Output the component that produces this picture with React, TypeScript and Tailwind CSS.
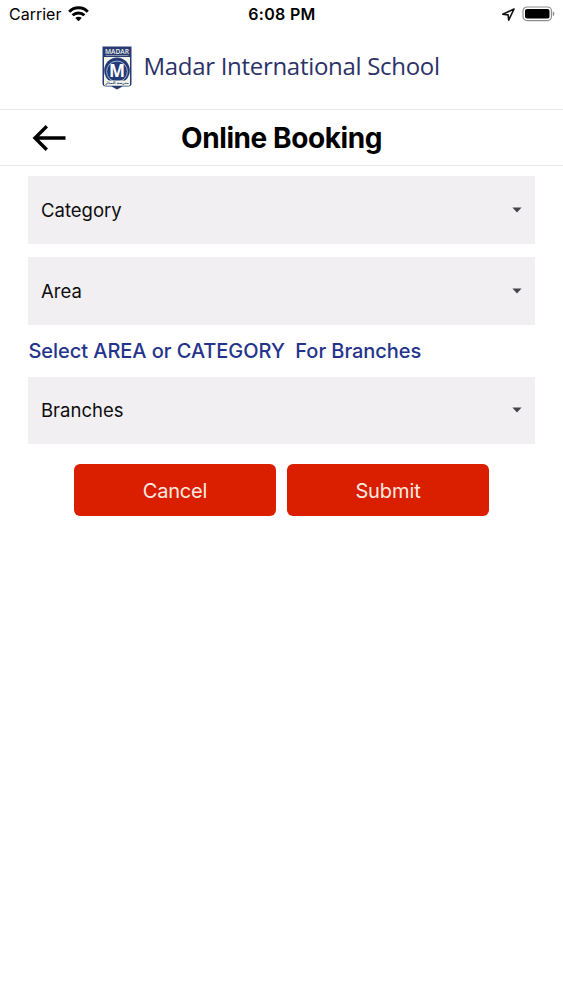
import React from 'react';

interface SelectFieldProps {
  label: string;
}

const SelectField: React.FC<SelectFieldProps> = ({ label }) => (
  <button className="flex h-[67.5px] w-full items-center justify-between bg-[#f1eff2] pl-[13px] pr-[13.5px] text-left">
    <span className="text-[18.5px] leading-6 text-[#0c0c0e]">{label}</span>
    <svg width="10" height="6" viewBox="0 0 10 6" className="shrink-0">
      <path d="M0.4 0.6h9.2L5 5.4z" fill="#47454a" />
    </svg>
  </button>
);

const StatusBar = () => (
  <div className="grid h-[28px] grid-cols-3 items-center pl-[9px] pr-[8px] text-black">
    <div className="flex items-center gap-[7px]">
      <span className="text-[16px] leading-5">Carrier</span>
      <svg width="21" height="16" viewBox="0 0 21 16" fill="none" stroke="#000" strokeWidth="3">
        <path d="M1.2 5.7a13.2 13.2 0 0 1 18.6 0" />
        <path d="M4.6 9.3a8.4 8.4 0 0 1 11.8 0" />
        <path d="M10.5 15.3l-3.2-3.2a4.6 4.6 0 0 1 6.4 0z" fill="#000" stroke="none" />
      </svg>
    </div>
    <span className="text-center text-[16px] font-semibold leading-5 tracking-[0.3px]">6:08 PM</span>
    <div className="flex items-center justify-end gap-[6px]">
      <svg width="15" height="15" viewBox="0 0 15 15" fill="none" stroke="#111" strokeWidth="1.6" strokeLinejoin="round">
        <path d="M13 2L1.8 7.3l5.3.6.6 5.3z" />
      </svg>
      <svg width="33" height="16" viewBox="0 0 33 16">
        <rect x="1" y="1" width="28.5" height="13.6" rx="4" fill="none" stroke="#8d8d8d" strokeWidth="1.2" />
        <rect x="3" y="3" width="24.5" height="9.6" rx="2" fill="#000" />
        <path d="M30.9 5.3c1.9.8 1.9 4.2 0 5z" fill="#8d8d8d" />
      </svg>
    </div>
  </div>
);

const SchoolCrest = () => (
  <svg width="30" height="44" viewBox="0 0 30 44" className="shrink-0">
    <path d="M.5.5h29v37c0 2-1.2 3-3.5 3h-5.5L15 43.5l-5.5-3H4c-2.3 0-3.5-1-3.5-3z" fill="#283b72" />
    <path d="M2 11h26v27c0 1-.8 1.6-2 1.6H4c-1.2 0-2-.6-2-1.6z" fill="#f3f5e9" />
    <path d="M3.5 9.5h23" stroke="#9ba6b8" strokeWidth=".8" />
    <ellipse cx="15" cy="24.5" rx="12.8" ry="13" fill="#233a78" />
    <circle cx="15" cy="25.5" r="10.4" fill="none" stroke="#c9d2dc" strokeWidth=".8" />
    <path d="M2 34.6h26V38c0 1-.8 1.6-2 1.6H4c-1.2 0-2-.6-2-1.6z" fill="#f3f5e9" />
    <text x="15" y="7.5" textAnchor="middle" fontSize="7" fontWeight="600" textLength="24" lengthAdjust="spacingAndGlyphs" fill="#f0f3e8" fontFamily="Open Sans, sans-serif">MADAR</text>
    <text x="15" y="31.2" textAnchor="middle" fontSize="17" fontWeight="700" fill="#fff" fontFamily="Open Sans, sans-serif">M</text>
    <text x="15" y="38.3" textAnchor="middle" fontSize="3.6" fontWeight="700" fill="#283b72" fontFamily="DejaVu Sans, sans-serif">مدرسة المدار</text>
  </svg>
);

export default function App() {
  return (
    <div className="min-h-[1000px] w-full bg-white font-['Inter',sans-serif]">
      <StatusBar />

      <header className="flex h-[82px] items-start border-b border-[#e9e8ea] pl-[102px] pt-[18px]">
        <SchoolCrest />
        <span className="ml-[11.5px] mt-[3px] whitespace-nowrap font-['Open_Sans',sans-serif] text-[24px] leading-[34px] tracking-[-0.3px] text-[#2c3267]">
          Madar International School
        </span>
      </header>

      <div className="grid h-[56px] grid-cols-[100px_1fr_100px] items-center border-b border-[#e9e8ea]">
        <button aria-label="Back" className="pl-[32px]">
          <svg width="34" height="28" viewBox="0 0 34 28" fill="none" stroke="#000" strokeWidth="3.4">
            <path d="M33.5 14H3.5M14.8 2.2L3 14l11.8 11.8" />
          </svg>
        </button>
        <h1 className="text-center text-[28px] font-bold leading-8 tracking-[-0.42px] text-black">Online Booking</h1>
      </div>

      <main className="px-7 pt-[10px]">
        <SelectField label="Category" />
        <div className="h-[13.5px]" />
        <SelectField label="Area" />
        <p className="flex h-[52px] items-center whitespace-pre pl-[0.5px] text-[20px] font-medium tracking-[-0.05px] text-[#25348b]">
          {'Select AREA or CATEGORY  For Branches'}
        </p>
        <SelectField label="Branches" />

        <div className="mt-[20px] flex justify-center gap-[11px]">
          <button className="h-[52px] w-[202px] rounded-[6px] bg-[#da1e00] pt-px text-[20px] tracking-[-0.2px] text-[#fdeae0]">Cancel</button>
          <button className="h-[52px] w-[202px] rounded-[6px] bg-[#da1e00] pt-px text-[20px] tracking-[-0.1px] text-[#fdeae0]">Submit</button>
        </div>
      </main>
    </div>
  );
}
